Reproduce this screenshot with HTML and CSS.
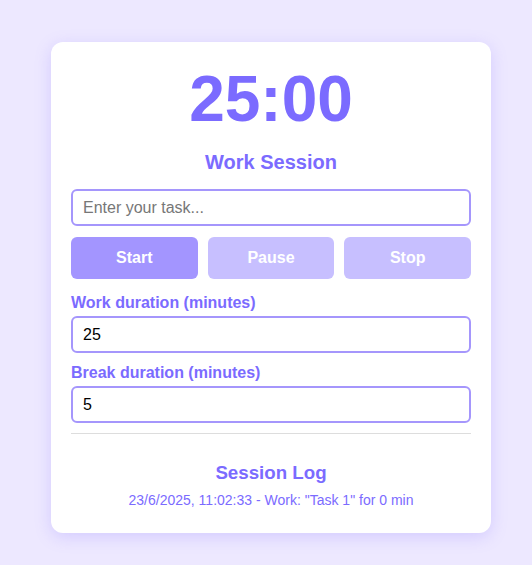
FILE: index.html
```html
<!DOCTYPE html>
<html>
<head>
<meta charset="utf-8">
<link rel="stylesheet" href="styles.css">
</head>
<body>
<div class="card">
  <div class="timer">25:00</div>
  <h2 class="mode">Work Session</h2>
  <input class="field" type="text" placeholder="Enter your task...">
  <div class="buttons">
    <button class="btn">Start</button>
    <button class="btn" disabled>Pause</button>
    <button class="btn" disabled>Stop</button>
  </div>
  <label class="label">Work duration (minutes)</label>
  <input class="field" type="number" value="25">
  <label class="label">Break duration (minutes)</label>
  <input class="field" type="number" value="5">
  <hr class="divider">
  <h3 class="log-title">Session Log</h3>
  <div class="log-entry">23/6/2025, 11:02:33 - Work: "Task 1" for 0 min</div>
</div>
</body>
</html>
```
FILE: styles.css
```css
html, body {
  margin: 0;
  padding: 0;
}
body {
  background: #ede8ff;
  font-family: "Liberation Sans", Arial, sans-serif;
  padding: 42px 41px 0 51px;
  height: 565px;
  box-sizing: border-box;
}
.card {
  width: 440px;
  box-sizing: border-box;
  background: #fff;
  border-radius: 12px;
  box-shadow: 0 4px 16px rgba(140, 120, 255, 0.25);
  padding: 20px 20px 25px;
  display: flex;
  flex-direction: column;
  color: #7b6bff;
}
.timer {
  font-size: 64px;
  font-weight: bold;
  text-align: center;
  line-height: 74px;
  margin-top: 0;
}
.mode {
  font-size: 20px;
  font-weight: bold;
  text-align: center;
  margin: 15px 0 15px;
  line-height: 23px;
}
.field {
  display: block;
  width: 100%;
  box-sizing: border-box;
  height: 37px;
  border: 2px solid #a596fc;
  border-radius: 6px;
  padding: 0 10px;
  font-family: "Liberation Sans", Arial, sans-serif;
  font-size: 16px;
  color: #000;
  outline: none;
}
.field::placeholder {
  color: #777;
}
.field::-webkit-outer-spin-button,
.field::-webkit-inner-spin-button {
  -webkit-appearance: none;
  margin: 0;
}
.buttons {
  display: flex;
  gap: 10px;
  margin: 11px 0 13px;
}
.btn {
  flex: 1;
  height: 42px;
  border: none;
  border-radius: 6px;
  background: #a395ff;
  color: #fff;
  font-family: "Liberation Sans", Arial, sans-serif;
  font-size: 16px;
  font-weight: bold;
}
.btn:disabled {
  background: #c7bfff;
}
.label {
  font-size: 16px;
  font-weight: bold;
  line-height: 18px;
  margin: 2px 0 4px;
}
.field + .label {
  margin-top: 11px;
}
.divider {
  border: none;
  border-top: 1px solid #ddd;
  margin: 10px 0 0;
}
.log-title {
  font-size: 18.72px;
  font-weight: bold;
  text-align: center;
  margin: 28px 0 8px;
  line-height: 22px;
}
.log-entry {
  font-size: 14px;
  text-align: center;
  line-height: 16px;
}
```
